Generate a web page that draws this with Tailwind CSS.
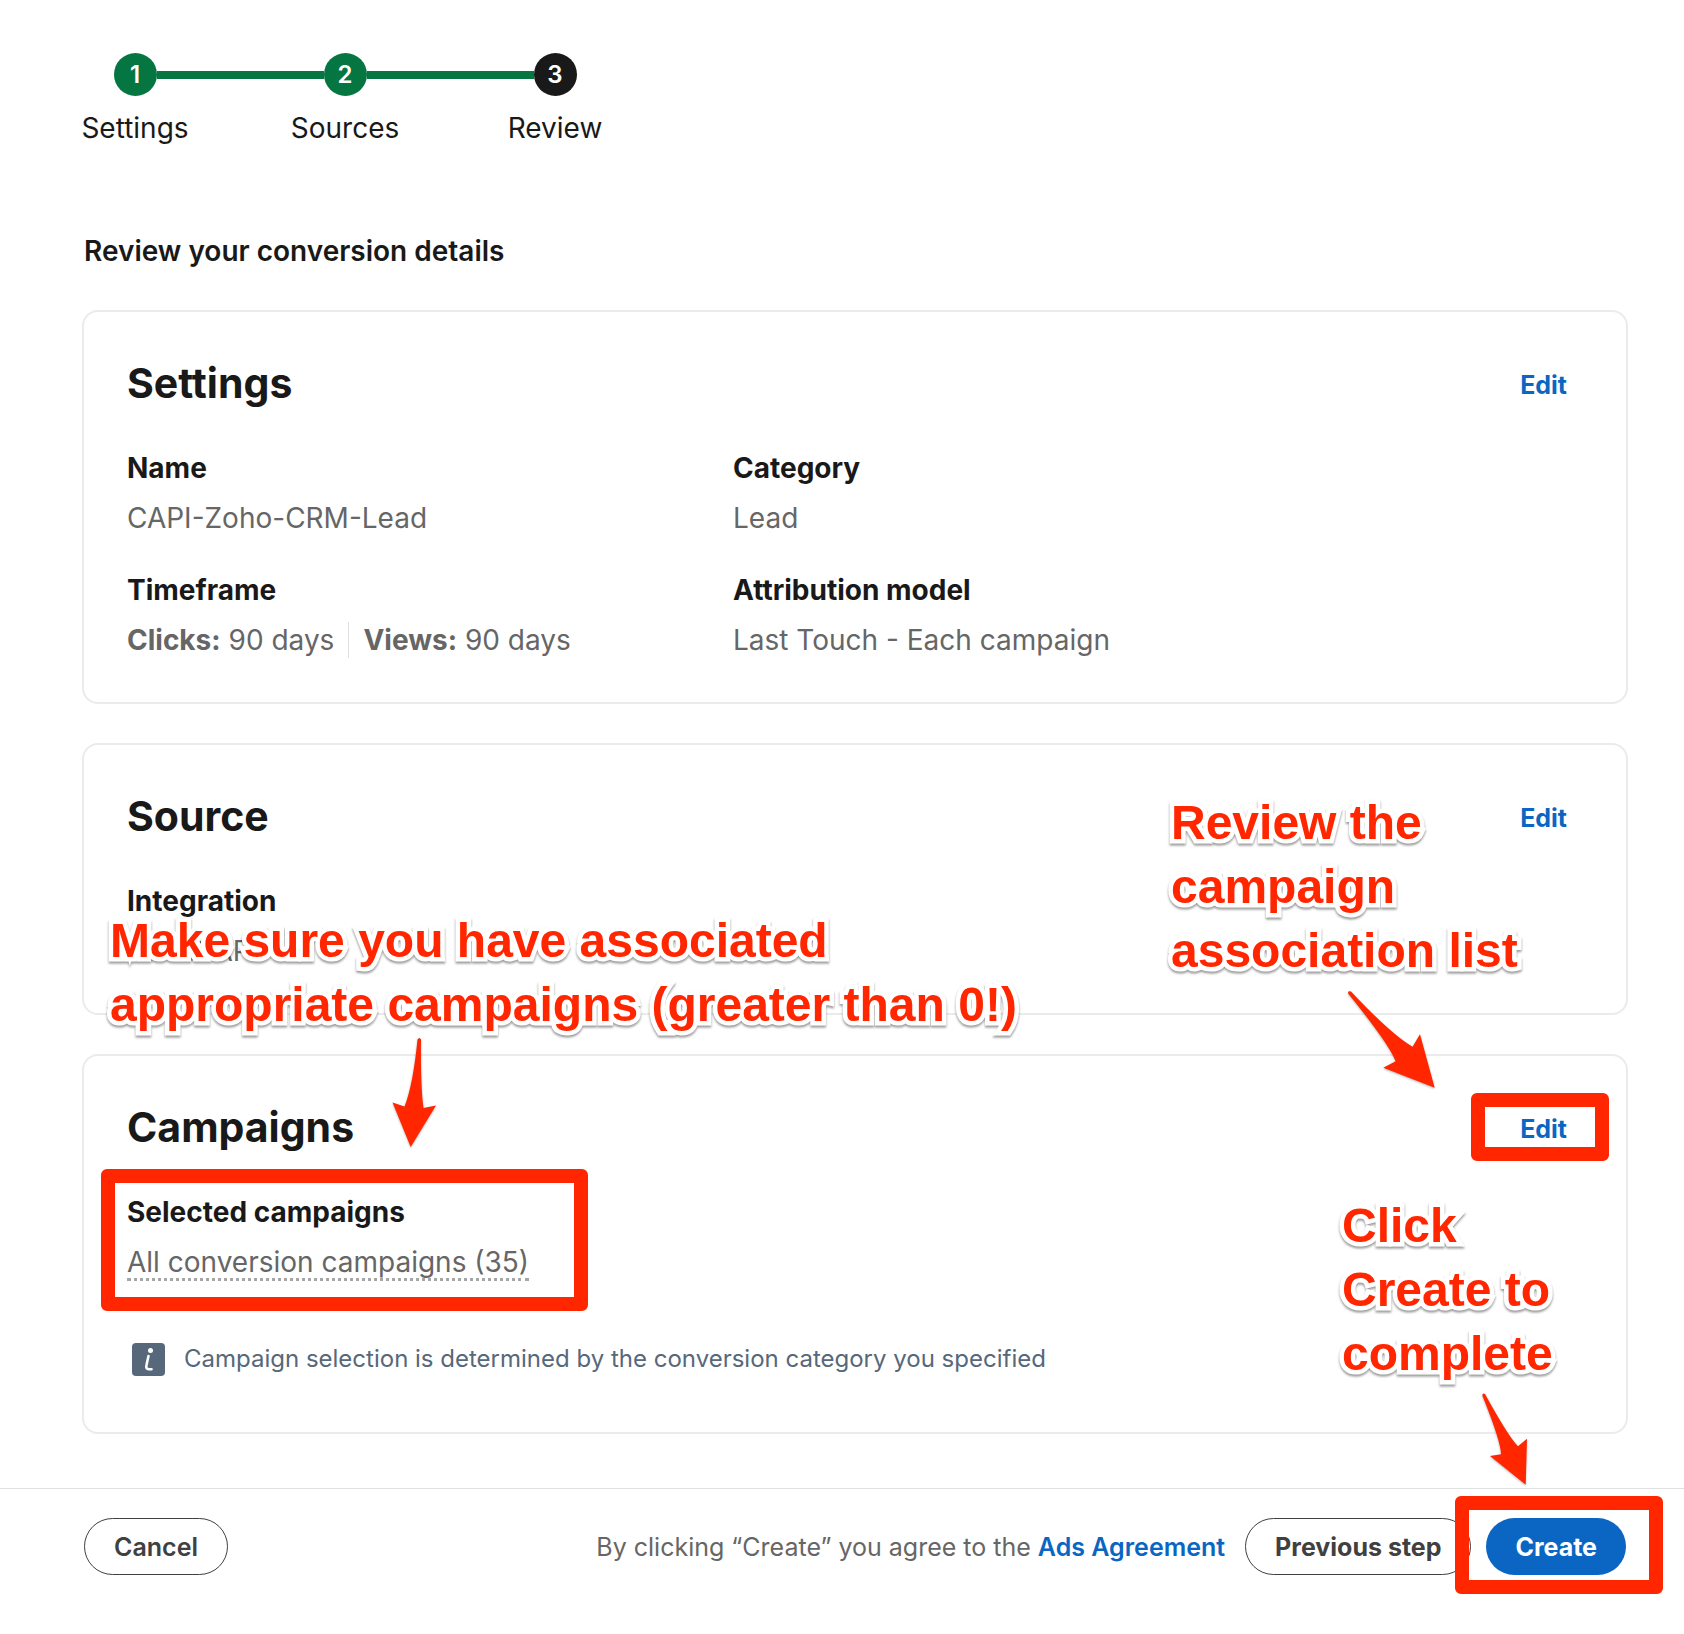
<!DOCTYPE html>
<html lang="en">
<head>
<meta charset="utf-8">
<meta name="viewport" content="width=device-width, initial-scale=1">
<title>Review conversion</title>
<script src="https://cdn.jsdelivr.net/npm/@tailwindcss/browser@4"></script>
</head>
<body class="bg-white font-[Inter,sans-serif] text-[#191919]">
<main class="pt-[53px] pr-14 pl-[82px]">
  <!-- Progress steps -->
  <ol class="-ml-[52px] flex text-center text-[28px] leading-10">
    <li class="w-[210px]">
      <div class="flex items-center">
        <span class="h-2 flex-1"></span>
        <span class="flex size-[43px] items-center justify-center rounded-full bg-[#057642] text-2xl font-semibold text-white">1</span>
        <span class="h-2 flex-1 bg-[#057642]"></span>
      </div>
      <p class="mt-3">Settings</p>
    </li>
    <li class="w-[210px]">
      <div class="flex items-center">
        <span class="h-2 flex-1 bg-[#057642]"></span>
        <span class="flex size-[43px] items-center justify-center rounded-full bg-[#057642] text-2xl font-semibold text-white">2</span>
        <span class="h-2 flex-1 bg-[#057642]"></span>
      </div>
      <p class="mt-3">Sources</p>
    </li>
    <li class="w-[210px]" aria-current="step">
      <div class="flex items-center">
        <span class="h-2 flex-1 bg-[#057642]"></span>
        <span class="flex size-[43px] items-center justify-center rounded-full bg-[#191919] text-2xl font-semibold text-white">3</span>
        <span class="h-2 flex-1"></span>
      </div>
      <p class="mt-3">Review</p>
    </li>
  </ol>

  <h1 class="mt-[83px] pl-0.5 text-[28px] leading-10 font-semibold">Review your conversion details</h1>

  <div class="mt-[39px] flex flex-col gap-[39px]">
    <!-- Settings -->
    <section class="rounded-2xl border-2 border-[#ebebeb] px-[43px] pt-[47px] pb-[42px]">
      <header class="flex items-end justify-between">
        <h2 class="text-[41px] leading-[48px] font-bold">Settings</h2>
        <button type="button" class="px-4 text-[25px] leading-[44px] font-bold text-[#0a66c2]">Edit</button>
      </header>
      <dl class="mt-[41px] grid grid-cols-[606px_1fr] gap-y-8 text-[28px] leading-10 text-[#666]">
        <div>
          <dt class="font-bold text-[#191919]">Name</dt>
          <dd class="mt-2.5">CAPI-Zoho-CRM-Lead</dd>
        </div>
        <div>
          <dt class="font-bold text-[#191919]">Category</dt>
          <dd class="mt-2.5">Lead</dd>
        </div>
        <div>
          <dt class="font-bold text-[#191919]">Timeframe</dt>
          <dd class="mt-2.5 flex items-center">
            <span><b class="font-bold">Clicks:</b> 90 days</span>
            <span class="mx-3.5 h-9 w-px bg-[#e0e0e0]"></span>
            <span><b class="font-bold">Views:</b> 90 days</span>
          </dd>
        </div>
        <div>
          <dt class="font-bold text-[#191919]">Attribution model</dt>
          <dd class="mt-2.5">Last Touch - Each campaign</dd>
        </div>
      </dl>
    </section>

    <!-- Source -->
    <section class="relative rounded-2xl border-2 border-[#ebebeb] px-[43px] pt-[47px] pb-[42px]">
      <header class="flex items-end justify-between">
        <h2 class="text-[41px] leading-[48px] font-bold">Source</h2>
        <button type="button" class="px-4 text-[25px] leading-[44px] font-bold text-[#0a66c2]">Edit</button>
      </header>
      <dl class="mt-[41px] text-[28px] leading-10 text-[#666]">
        <dt class="font-bold text-[#191919]">Integration</dt>
        <dd class="mt-2.5">Direct API</dd>
      </dl>

      <p class="absolute top-[164px] left-[26px] z-10 font-['Liberation_Sans',sans-serif] text-5xl leading-[64px] font-bold whitespace-nowrap text-[#ff2600] drop-shadow-[0_2px_1px_rgba(0,0,0,0.4)] [-webkit-text-stroke:9px_white] [paint-order:stroke_fill] [stroke-linejoin:round]">Make sure you have associated<br>appropriate campaigns (greater than 0!)</p>
      <p class="absolute top-[46px] right-[105px] z-10 w-[350px] font-['Liberation_Sans',sans-serif] text-5xl leading-[64px] font-bold whitespace-nowrap text-[#ff2600] drop-shadow-[0_2px_1px_rgba(0,0,0,0.4)] [-webkit-text-stroke:9px_white] [paint-order:stroke_fill] [stroke-linejoin:round]">Review the<br>campaign<br>association list</p>
      <svg class="absolute top-[245px] right-[189px] z-10 drop-shadow-[0_1px_1px_rgba(0,0,0,0.3)]" width="90" height="100" viewBox="0 0 90 100" fill="#ff2600" aria-hidden="true"><path d="M1.5 4Q0 0.500 4 1.500Q45 45 65.600 56.700L73 44.300L87.700 97.700L36.300 77.700L48.600 71.300Q42 54 1.500 4Z"/></svg>
    </section>

    <!-- Campaigns -->
    <section class="relative rounded-2xl border-2 border-[#ebebeb] px-[43px] pt-[47px] pb-[55px]">
      <header class="flex items-end justify-between">
        <h2 class="text-[41px] leading-[48px] font-bold">Campaigns</h2>
        <button type="button" class="px-4 text-[25px] leading-[44px] font-bold text-[#0a66c2]">Edit</button>
      </header>
      <dl class="mt-[41px] text-[28px] leading-10 text-[#666]">
        <dt class="font-bold text-[#191919]">Selected campaigns</dt>
        <dd class="mt-2.5 h-10"><span class="inline-block border-b-3 border-dotted border-[#a6a6a6] leading-8">All conversion campaigns (35)</span></dd>
      </dl>
      <div class="mt-[59px] flex items-center gap-[19px] pl-[5px] text-2xl leading-9 text-[#56687a]">
        <svg class="shrink-0" width="33" height="33" viewBox="0 0 33 33" aria-hidden="true">
          <rect width="33" height="33" rx="4" fill="#56687a"/>
          <circle cx="18.500" cy="7.500" r="2.500" fill="#fff"/>
          <path d="M16.500 13L14.500 22Q13.500 26 16.800 26.300H19.500" fill="none" stroke="#fff" stroke-width="2.600" stroke-linecap="round"/>
        </svg>
        <p>Campaign selection is determined by the conversion category you specified</p>
      </div>

      <span class="absolute top-[37px] right-[17px] h-[68px] w-[138px] rounded-md border-14 border-[#ff2600]"></span>
      <span class="absolute top-[113px] left-[17px] h-[142px] w-[487px] rounded-md border-14 border-[#ff2600]"></span>
      <svg class="absolute -top-[19px] left-[308px] z-10 drop-shadow-[0_1px_1px_rgba(0,0,0,0.3)]" width="46" height="112" viewBox="0 0 46 112" fill="#ff2600" aria-hidden="true"><path d="M25.500 2.500Q27.500 -0.500 29 2.500Q28.500 50 31.500 71L44 68.500L18.700 110L0.500 65.500L12.500 69.500Q21 48 25.500 2.500Z"/></svg>
      <p class="absolute top-[138px] right-[54px] z-10 w-[230px] font-['Liberation_Sans',sans-serif] text-5xl leading-[64px] font-bold whitespace-nowrap text-[#ff2600] drop-shadow-[0_2px_1px_rgba(0,0,0,0.4)] [-webkit-text-stroke:9px_white] [paint-order:stroke_fill] [stroke-linejoin:round]">Click<br>Create to<br>complete</p>
      <svg class="absolute top-[336px] right-[97px] z-10 drop-shadow-[0_1px_1px_rgba(0,0,0,0.3)]" width="48" height="95" viewBox="0 0 48 95" fill="#ff2600" aria-hidden="true"><path d="M1.500 4Q1 0.500 4 2Q27 44 37 54.300L46 46.700L44.700 92.700L9 64L20 62.300Q20 50 1.500 4Z"/></svg>
    </section>
  </div>
</main>

<!-- Action bar -->
<footer class="mt-[54px] flex items-center border-t border-[#e0e0e0] pt-[29px] pr-[58px] pb-[58px] pl-[84px] text-[25px] leading-9">
  <button type="button" class="h-[57px] rounded-full border border-[#404040] px-[29px] font-semibold text-[#404040]">Cancel</button>
  <p class="mr-5 ml-auto text-[#666]">By clicking “Create” you agree to the <a href="#" class="font-semibold text-[#0a66c2]">Ads Agreement</a></p>
  <button type="button" class="h-[57px] rounded-full border border-[#404040] px-[29px] font-bold text-[#404040]">Previous step</button>
  <div class="relative ml-[15px]">
    <button type="button" class="block h-[57px] rounded-full bg-[#0a66c2] px-[29px] font-bold text-white">Create</button>
    <span class="absolute -top-[22px] -right-[37px] h-[98px] w-[208px] rounded-md border-14 border-[#ff2600]"></span>
  </div>
</footer>
</body>
</html>
